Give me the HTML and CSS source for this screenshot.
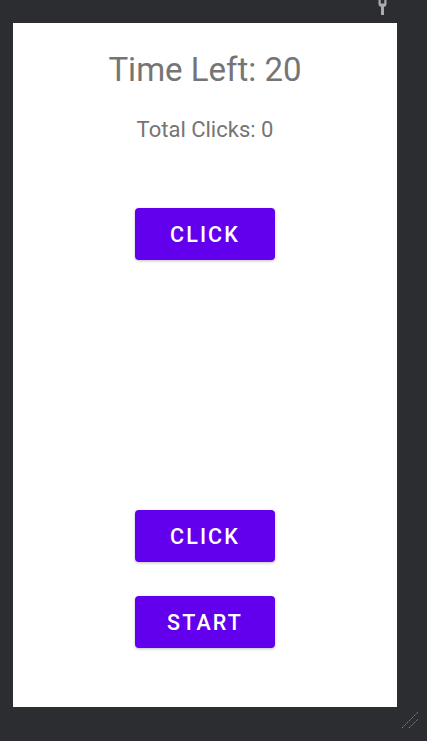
FILE: index.html
```html
<!DOCTYPE html>
<html>
<head>
<meta charset="utf-8">
<link rel="stylesheet" href="styles.css">
</head>
<body>
<div class="topbar">
  <svg class="wrench" width="9" height="15" viewBox="0 0 9 15">
    <path d="M0.5 0 L0.5 4 Q0.5 6.5 3 7 L3 15 L6 15 L6 7 Q8.5 6.5 8.5 4 L8.5 0 L6.3 0 L6.3 3.5 L2.7 3.5 L2.7 0 Z" fill="#a9abae"/>
  </svg>
</div>
<main class="screen">
  <h1 class="time">Time Left: 20</h1>
  <p class="clicks">Total Clicks: 0</p>
  <button class="btn btn-first">CLICK</button>
  <button class="btn btn-second">CLICK</button>
  <button class="btn btn-start">START</button>
</main>
<div class="grip">
  <svg width="20" height="20" viewBox="0 0 20 20">
    <line x1="2" y1="18" x2="18" y2="2" stroke="#8a8c90" stroke-width="1" stroke-dasharray="1.4 1"/>
    <line x1="9" y1="18" x2="18" y2="9" stroke="#8a8c90" stroke-width="1" stroke-dasharray="1.4 1"/>
  </svg>
</div>
</body>
</html>
```
FILE: styles.css
```css
html, body {
  margin: 0;
  padding: 0;
  background: #2b2d30;
  width: 427px;
  height: 741px;
  overflow: hidden;
  font-family: Roboto, "Liberation Sans", sans-serif;
}
.topbar {
  height: 23px;
  display: flex;
  justify-content: flex-end;
  padding-right: 40px;
  box-sizing: border-box;
}
.wrench {
  display: block;
}
.screen {
  margin-left: 13px;
  width: 384px;
  height: 684px;
  background: #ffffff;
  display: flex;
  flex-direction: column;
  align-items: center;
  box-sizing: border-box;
  padding-top: 27px;
}
.time {
  margin: 0;
  font-size: 33px;
  font-weight: 400;
  color: #757575;
  line-height: 40px;
}
.clicks {
  margin: 27px 0 0 0;
  font-size: 22px;
  font-weight: 400;
  color: #757575;
  line-height: 26px;
}
.btn {
  width: 140px;
  height: 52px;
  border: none;
  border-radius: 4px;
  background: #6200ee;
  color: #ffffff;
  font-family: Roboto, "Liberation Sans", sans-serif;
  font-weight: 500;
  font-size: 21.5px;
  letter-spacing: 2.1px;
  box-shadow: 0 1px 3px rgba(0,0,0,0.25);
  padding: 0;
}
.btn-first { margin-top: 65px; }
.btn-second { margin-top: 250px; }
.btn-start { margin-top: 34px; }
.grip {
  position: absolute;
  left: 400px;
  top: 710px;
}
.grip svg { display: block; }
```
